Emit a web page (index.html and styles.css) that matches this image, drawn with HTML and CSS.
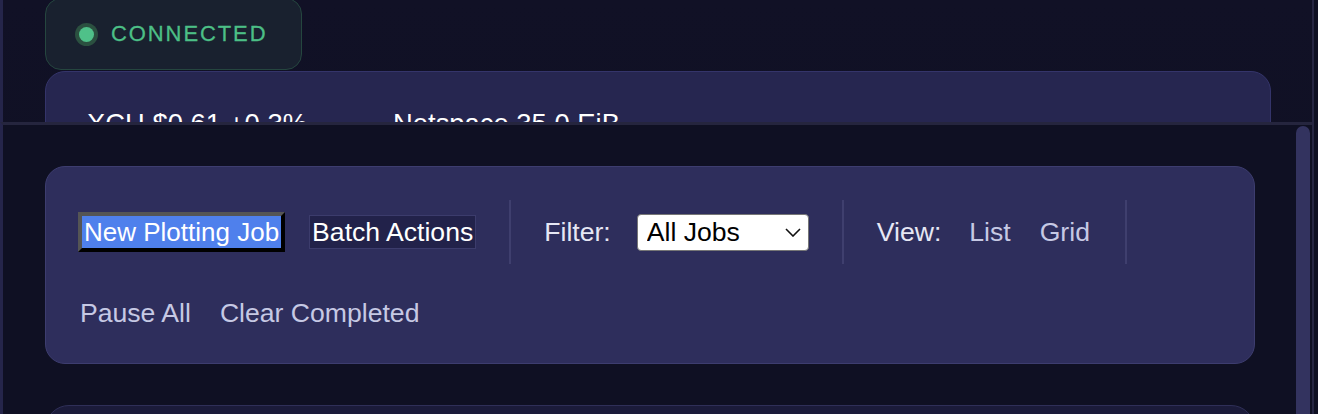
FILE: index.html
```html
<!DOCTYPE html>
<html lang="en">
<head>
<meta charset="utf-8">
<title>Plotting</title>
<link rel="stylesheet" href="styles.css">
</head>
<body>
<div class="app">
  <div class="edge"></div>
  <main class="main">
    <div class="badge"><span class="dot"></span><span class="badge-text">CONNECTED</span></div>
    <section class="stats">
      <span class="stat">XCH $0.61 +0.3%</span>
      <span class="stat">Netspace 35.0 EiB</span>
    </section>
  </main>
  <div class="rail"></div>
</div>

<div class="overlay">
  <div class="overlay-body">
    <section class="toolbar">
      <div class="group">
        <button class="btn-primary">New Plotting Job</button>
        <button class="btn-secondary">Batch Actions</button>
      </div>
      <span class="sep"></span>
      <div class="group">
        <span class="label">Filter:</span>
        <span class="select-wrap">
          <select class="select"><option>All Jobs</option></select>
          <svg class="chev" width="16" height="9" viewBox="0 0 16 9"><path d="M1 1l7 7 7-7" fill="none" stroke="#111" stroke-width="1.6"/></svg>
        </span>
      </div>
      <span class="sep"></span>
      <div class="group">
        <span class="label">View:</span>
        <button class="link">List</button>
        <button class="link">Grid</button>
      </div>
      <span class="sep"></span>
      <div class="group">
        <button class="link">Pause All</button>
        <button class="link">Clear Completed</button>
      </div>
    </section>
    <section class="next-card"></section>
  </div>
  <div class="thumb"></div>
</div>
</body>
</html>
```

FILE: styles.css
```css
* { box-sizing: border-box; }
html, body {
  margin: 0;
  width: 1318px;
  height: 414px;
  overflow: hidden;
  background: #0f1022;
  font-family: "Liberation Sans", Arial, sans-serif;
}
.app {
  display: flex;
  height: 414px;
}
.edge {
  width: 3px;
  background: #25254a;
  flex: none;
}
.main {
  flex: 1;
  padding: 0 41px 0 42px;
  background: linear-gradient(180deg, #111126 0%, #0f1022 100%);
}
.rail {
  width: 2px;
  background: #262642;
  flex: none;
  margin-right: 4px;
}
.badge {
  display: inline-flex;
  align-items: center;
  height: 72px;
  margin-top: -2px;
  padding: 0 34px 0 33px;
  background: #19212f;
  border: 1px solid #25463f;
  border-radius: 16px;
  color: #4cbf86;
}
.dot {
  width: 15px;
  height: 15px;
  border-radius: 50%;
  background: #4fc189;
  box-shadow: 0 0 0 4px #2b5040;
  margin-right: 17px;
}
.badge-text {
  font-size: 22px;
  letter-spacing: 1.9px;
  line-height: 26px;
  -webkit-text-stroke: 0.3px #4cbf86;
}
.stats {
  margin-top: 1px;
  height: 120px;
  background: #262650;
  border: 1px solid #34346a;
  border-radius: 20px;
  padding: 36px 42px 0 41px;
  display: flex;
  gap: 86px;
}
.stat {
  color: #ffffff;
  font-size: 27.4px;
  line-height: 32px;
}

.overlay {
  position: absolute;
  left: 0;
  top: 122px;
  width: 1312px;
  bottom: 0;
  background: #0f1023;
  border-top: 3px solid #25253e;
  border-left: 3px solid #25254a;
  overflow: hidden;
}
.overlay-body {
  padding: 41px 0 0 42px;
  display: flex;
  flex-direction: column;
  gap: 41px;
}
.toolbar {
  width: 1210px;
  background: #2e2e5c;
  border: 1px solid #3d3d6f;
  border-radius: 20px;
  padding: 33px 33px 33px 32px;
  display: flex;
  flex-wrap: wrap;
  align-items: center;
  gap: 33px;
}
.group {
  display: flex;
  align-items: center;
  gap: 24px;
}
.sep {
  width: 2px;
  height: 64px;
  background: #3f3f6e;
}
button {
  font-family: "Liberation Sans", Arial, sans-serif;
  font-size: 26.6px;
  margin: 0;
  cursor: pointer;
}
.btn-primary {
  border: 4px solid;
  border-color: #555555 #000000 #000000 #555555;
  border-style: outset;
  background: #4f80ec;
  color: #ffffff;
  padding: 0 2px;
  font-size: 26px;
  line-height: 32px;
}
.btn-secondary {
  border: 1px solid #3c3c6c;
  background: #22224a;
  color: #ffffff;
  padding: 1px 2px;
  line-height: 30px;
}
.label {
  color: #e6e7f4;
  font-size: 26.6px;
  line-height: 30px;
}
.group .label + .select-wrap { margin-left: 2px; }
.group .label + .link { margin-left: 2px; }
.select-wrap {
  position: relative;
  display: inline-block;
}
.select {
  -webkit-appearance: none;
  appearance: none;
  width: 172px;
  height: 37px;
  padding: 0 9px;
  font-family: "Liberation Sans", Arial, sans-serif;
  font-size: 26.6px;
  color: #000000;
  background: #ffffff;
  border: 1px solid #767676;
  border-radius: 4px;
  display: block;
}
.chev {
  position: absolute;
  right: 8px;
  top: 14px;
}
.link {
  background: transparent;
  border: none;
  color: #c6c9e4;
  padding: 2px 2px;
  line-height: 29px;
}
.group .link + .link { margin-left: 1px; }
.next-card {
  width: 1210px;
  height: 120px;
  background: #1b1b3a;
  border: 1px solid #2f2f58;
  border-radius: 24px;
}
.thumb {
  position: absolute;
  top: 1px;
  right: 2px;
  width: 14px;
  height: 400px;
  background: #33335f;
  border-radius: 7px;
}
```
